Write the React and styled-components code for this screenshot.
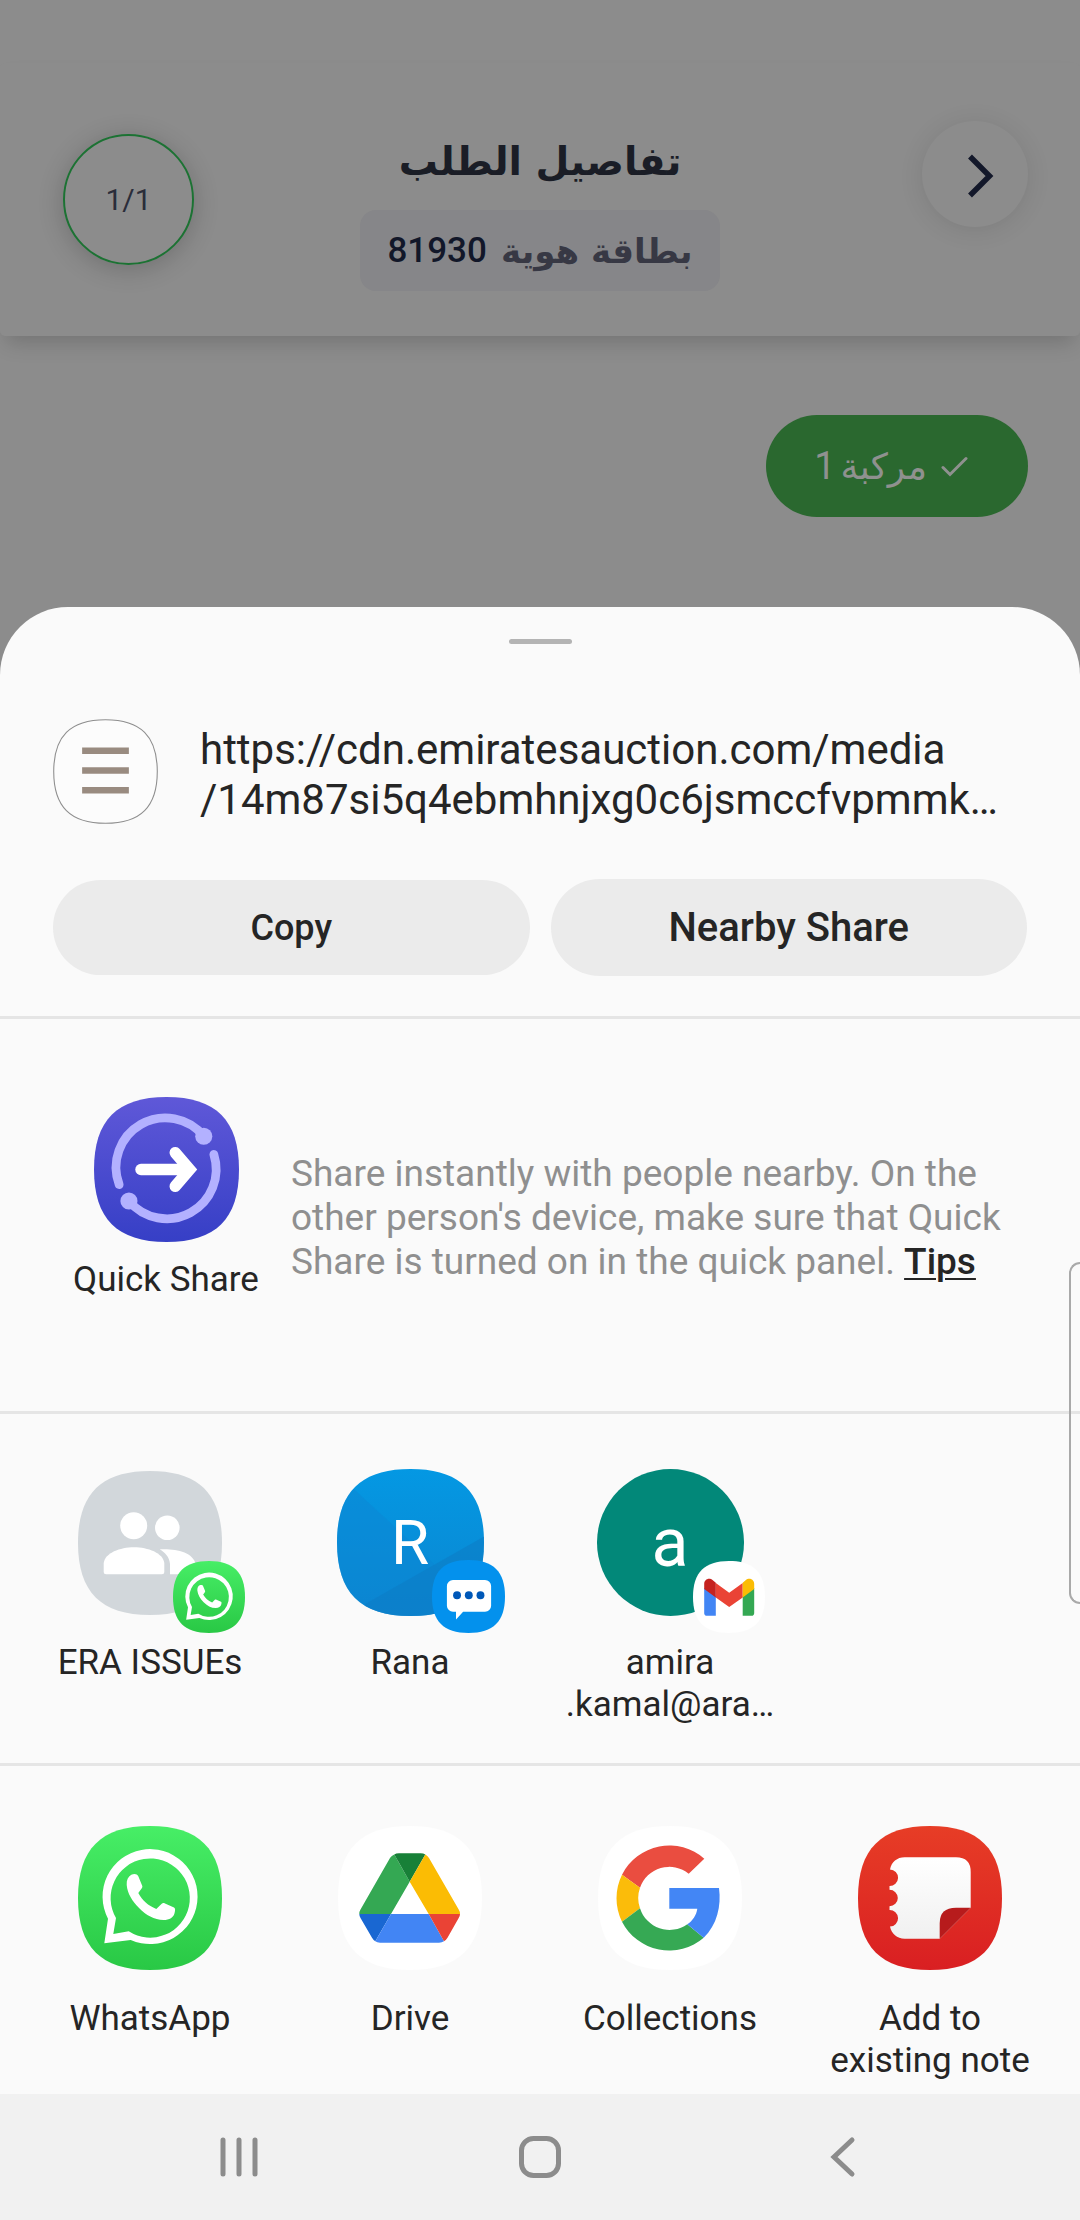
import React from "react";
import styled, { createGlobalStyle } from "styled-components";

const GlobalStyle = createGlobalStyle`
  *, *::before, *::after { box-sizing: border-box; }
  body { margin: 0; background: #8c8c8c; }
  button { font: inherit; color: inherit; border: 0; padding: 0; background: none; cursor: pointer; }
  svg { display: block; }
`;

const Screen = styled.div`
  position: relative;
  display: flex;
  flex-direction: column;
  min-height: 100vh;
  overflow: hidden;
  background: #8c8c8c;
  color: #252525;
  font-family: Roboto, "Liberation Sans", sans-serif;
`;

/* ---------- dimmed page behind the sheet ---------- */

const OrderHeader = styled.header`
  display: grid;
  grid-template-columns: 1fr auto 1fr;
  align-items: start;
  margin-top: 63px;
  padding: 58px 52px 45px;
  border-radius: 5px;
  background: #8c8c8c;
  box-shadow: 0 12px 20px -6px rgba(0, 0, 0, 0.18);
`;

const Progress = styled.div`
  display: grid;
  place-items: center;
  width: 131px;
  height: 131px;
  margin: 13px 0 0 11px;
  border: 2px solid #1c7233;
  border-radius: 50%;
  box-shadow: 0 4px 26px rgba(0, 0, 0, 0.2);
  color: #2a2d3a;
  font-size: 30px;
`;

const Heading = styled.div`
  display: flex;
  flex-direction: column;
  align-items: center;
  gap: 7px;
  direction: rtl;
  font-family: "DejaVu Sans", sans-serif;
`;

const Title = styled.h1`
  margin: 0;
  font-size: 39px;
  line-height: 82px;
  font-weight: 700;
  color: #1a1d26;
`;

const Subtitle = styled.div`
  display: flex;
  align-items: center;
  gap: 14px;
  height: 81px;
  padding: 0 27px;
  border-radius: 16px;
  background: #868689;
  color: #373844;
  font-size: 34px;
  font-weight: 700;
`;

const OrderNumber = styled.span`
  color: #121729;
  font-family: Roboto, sans-serif;
  font-size: 35px;
  font-weight: 500;
`;

const RoundButton = styled.button`
  display: grid;
  place-items: center;
  justify-self: end;
  width: 106px;
  height: 106px;
  border-radius: 50%;
  box-shadow: 0 3px 24px rgba(0, 0, 0, 0.1);
`;

const Vehicles = styled.div`
  display: flex;
  direction: rtl;
  padding: 79px 52px 90px;
`;

const VehicleChip = styled.button`
  display: flex;
  align-items: center;
  height: 102px;
  padding: 0 60px 0 48px;
  border-radius: 51px;
  background: #2a682f;
  color: #8f918f;
  font-family: "DejaVu Sans", sans-serif;
  font-size: 36px;

  svg { margin-left: 14px; }
`;

const ChipCount = styled.span`
  margin-right: 5px;
  font-family: Roboto, sans-serif;
  font-size: 38px;
`;

/* ---------- share sheet ---------- */

const Sheet = styled.main`
  display: flex;
  flex-direction: column;
  flex: 1;
  border-radius: 68px 68px 0 0;
  background: #fafafa;
`;

const Grabber = styled.div`
  align-self: center;
  width: 63px;
  height: 5px;
  margin-top: 32px;
  border-radius: 3px;
  background: #b4b4b4;
`;

const LinkPreview = styled.section`
  display: flex;
  gap: 42px;
  padding: 75px 53px 54px;
`;

const LinkText = styled.p`
  flex: 1;
  margin: 6px 0 0;
  font-size: 42px;
  line-height: 50px;
  white-space: nowrap;
`;

const Actions = styled.div`
  display: flex;
  align-items: center;
  gap: 21px;
  padding: 0 53px 40px;
`;

const Action = styled.button`
  && {
    flex: 1;
    height: ${(p) => (p.$large ? 97 : 95)}px;
    border-radius: 49px;
    background: #ebebeb;
    font-size: ${(p) => (p.$large ? 40 : 36)}px;
    font-weight: 500;
  }
`;

const QuickShare = styled.section`
  display: flex;
  align-items: flex-start;
  gap: 31px;
  padding: 78px 72px 110px;
  border-top: 3px solid #e5e5e5;
`;

const QuickTarget = styled.button`
  display: flex;
  flex-direction: column;
  align-items: center;
  gap: 17px;
  flex: none;
  width: 188px;
`;

const QuickNote = styled.p`
  margin: 55px 0 0;
  color: #8f8f8f;
  font-size: 37px;
  line-height: 44px;
`;

const TipsLink = styled.a`
  display: inline-block;
  color: #252525;
  font-weight: 500;
  text-decoration: underline;
  text-decoration-thickness: 2px;
  text-underline-offset: 4px;
`;

const TargetGrid = styled.section`
  display: grid;
  grid-template-columns: repeat(4, 1fr);
  padding: ${(p) => (p.$contacts ? "55px 20px 37px" : "60px 20px 12px")};
  border-top: 3px solid #e5e5e5;
`;

const Target = styled.button`
  display: flex;
  flex-direction: column;
  align-items: center;
  gap: ${(p) => (p.$contacts ? 26 : 28)}px;
`;

const Label = styled.span`
  font-size: 35px;
  line-height: 42px;
  white-space: pre-line;
`;

const Avatar = styled.span`
  position: relative;
  display: grid;
  place-items: center;
  width: 147px;
  height: 147px;

  > * { grid-area: 1 / 1; }
`;

const Initial = styled.span`
  z-index: 1;
  color: #fff;
  font-size: ${(p) => p.$size}px;
  line-height: 62px;
`;

const Badge = styled.span`
  position: absolute;
  z-index: 2;
  right: -21px;
  bottom: -17px;
`;

const NavBar = styled.nav`
  display: grid;
  grid-template-columns: repeat(3, 1fr);
  height: 126px;
  padding: 0 88px;
  background: #f1f1f1;
`;

const NavButton = styled.button`
  display: grid;
  place-items: center;
`;

const EdgePanel = styled.div`
  position: absolute;
  top: 1262px;
  right: 0;
  width: 11px;
  height: 342px;
  border: 2px solid #a9a9a9;
  border-right: 0;
  border-radius: 12px 0 0 12px;
`;

/* ---------- drawings ---------- */

const SQUIRCLE =
  "M72 0C121 0 144 23 144 72S121 144 72 144 0 121 0 72 23 0 72 0Z";

function Tile({ size = 144, id, from, to, children }) {
  return (
    <svg width={size} height={size} viewBox="0 0 144 144" aria-hidden="true">
      <defs>
        <linearGradient id={id} x1="0" y1="0" x2="0" y2="1">
          <stop offset="0" stopColor={from} />
          <stop offset="1" stopColor={to} />
        </linearGradient>
        <clipPath id={`${id}-clip`}>
          <path d={SQUIRCLE} />
        </clipPath>
      </defs>
      <path d={SQUIRCLE} fill={`url(#${id})`} />
      <g clipPath={`url(#${id}-clip)`}>{children}</g>
    </svg>
  );
}

function WhatsAppIcon({ size, id }) {
  return (
    <Tile size={size} id={id} from="#47ee66" to="#29c845">
      <path
        fill="#fff"
        fillRule="evenodd"
        d="M26.3 117.3L30 92.7A47.5 47.5 0 1 1 52.7 114ZM35.3 108L50.7 105.3A39.6 39.6 0 1 0 38 92Z"
      />
      <path
        fill="#fff"
        d="M48.7 59C48.4 54 50 50.6 53.3 48.7C56 47.6 59 47.5 60.3 50.3L64.3 60C64.6 61.6 63.6 62.6 60.3 67C64.5 74.5 70 79.5 78.3 83L83.7 77.7C84.7 76.7 85.6 76.8 87 77.4L96 81.6C97.3 82.4 97.3 84 96.8 86C96 91.7 91 94 85.7 94C76 94 68 89 61.3 82.3C54 75 49.5 67.5 48.7 59Z"
      />
    </Tile>
  );
}

function QuickShareIcon() {
  return (
    <Tile size={145} id="quick" from="#5f58d8" to="#363fc6">
      <g fill="none" stroke="#b3b1ff" strokeWidth="8.7" strokeLinecap="round">
        <path d="M25 87A49 49 0 0 1 109 39" />
        <path d="M119 57A49 49 0 0 1 34.7 103.3" />
      </g>
      <circle cx="109" cy="39" r="8.5" fill="#b3b1ff" />
      <circle cx="34.7" cy="103.3" r="8.5" fill="#b3b1ff" />
      <g fill="none" stroke="#fff" strokeWidth="11.4" strokeLinecap="round">
        <path d="M46.7 72H90" />
        <path d="M80.7 55.3L95 72L80.7 88.7" />
      </g>
    </Tile>
  );
}

function GroupIcon() {
  return (
    <Tile id="group" from="#d2d7db" to="#d2d7db">
      <g fill="#fff">
        <circle cx="55.7" cy="54.7" r="13.5" />
        <circle cx="89.3" cy="56.7" r="12.3" />
        <path d="M28.2 103.3Q25.7 103.3 25.7 100.8V92C27 82 42 76.3 56 76.3S85 82 86.3 92V100.8Q86.3 103.3 83.8 103.3Z" />
        <path d="M81.7 78.3C98 77.5 115 81 117.7 93V103.3H92V93C91.5 86 87 81.5 81.7 78.3Z" />
      </g>
    </Tile>
  );
}

function BlueTile() {
  return (
    <Tile size={147} id="rana" from="#0498e3" to="#0b86d0">
      <path d="M17 20L70 69L144 140V144H0V20Z" fill="#0d86d3" opacity="0.45" />
      <path d="M144 66L28 132V144H144Z" fill="#0d7cc4" opacity="0.55" />
    </Tile>
  );
}

function GreenDisc() {
  return (
    <svg width="147" height="147" viewBox="0 0 147 147" aria-hidden="true">
      <circle cx="73.5" cy="73.5" r="73.5" fill="#028879" />
    </svg>
  );
}

function MessagesIcon() {
  return (
    <Tile size={73} id="messages" from="#0391ed" to="#0391ed">
      <g transform="scale(2)">
        <path
          fill="#fff"
          d="M21 19.7H52.3A6 6 0 0 1 58.3 25.7V45A6 6 0 0 1 52.3 51H30.7L23.7 58.7V51H21A6 6 0 0 1 14.7 45V25.7A6 6 0 0 1 21 19.7Z"
        />
        <g fill="#0058b8">
          <circle cx="24.7" cy="34.7" r="3.9" />
          <circle cx="36.3" cy="34.7" r="3.9" />
          <circle cx="47.8" cy="34.7" r="3.9" />
        </g>
      </g>
    </Tile>
  );
}

function GmailIcon() {
  return (
    <Tile size={72} id="gmail" from="#fff" to="#fff">
      <g transform="scale(2)">
        <path fill="#4285f4" d="M11.2 27L22.8 35V54.7H14Q11.2 54.7 11.2 51.9Z" />
        <path fill="#34a853" d="M61.2 27L49.7 35V54.7H58.4Q61.2 54.7 61.2 51.9Z" />
        <path fill="#ea4335" d="M22.8 22L36.2 31.7L49.7 22V36.4L36.2 46L22.8 36.4Z" />
        <path fill="#c5221f" d="M11.2 28V23C11.2 18.5 16 16 19.8 19.3L22.8 21.7V36.4Z" />
        <path fill="#fbbc04" d="M61.2 28V23C61.2 18.5 56.4 16 52.6 19.3L49.7 21.7V36.4Z" />
      </g>
    </Tile>
  );
}

function DriveIcon() {
  return (
    <Tile id="drive" from="#fff" to="#fff">
      <path fill="#34a853" d="M56.3 28.5L71.7 55.7L53 88H21.3Q21 86 22.5 83.5L52 32Q53.5 29.5 56.3 28.5Z" />
      <path fill="#188038" d="M56.3 28.5Q58 27.3 61 27.3H82.5Q85.5 27.3 87.3 28.5L71.7 55.7Z" />
      <path fill="#fbbc04" d="M87.3 28.5Q89.5 29.5 91 32L120.7 83.5Q122.3 86 122 88H90.7L71.7 55.7Z" />
      <path fill="#1967d2" d="M21.3 88H53L37.3 115.3Q35.5 114.3 34 111.8L22.5 92Q21.3 90 21.3 88Z" />
      <path fill="#4285f4" d="M53 88H90.7L106 115.3Q104 116.7 101 116.7H42Q39 116.7 37.3 115.3Z" />
      <path fill="#ea4335" d="M90.7 88H122Q122 90 120.7 92L109.5 111.8Q108 114.3 106 115.3Z" />
    </Tile>
  );
}

function GoogleIcon() {
  return (
    <Tile id="google" from="#fff" to="#fff">
      <path fill="#ea4d40" d="M24 48.7A53 53 0 0 1 106.3 32.7L90.7 47.7A31 31 0 0 0 42 61.7Z" />
      <path fill="#fbbc0a" d="M24 48.7A53 53 0 0 0 24 95.7L42 82.3A31 31 0 0 1 42 61.7Z" />
      <path fill="#36a954" d="M24 95.7A53 53 0 0 0 105.7 111.7L89.3 98.3A31 31 0 0 1 42 82.3Z" />
      <path fill="#4386f5" d="M71.3 62H121C123.5 80 119 99 105.7 111.7L89.3 98.3C94.5 95 98.5 89 99.3 82.7H71.3Z" />
    </Tile>
  );
}

function NotesIcon() {
  return (
    <Tile id="notes" from="#e73d26" to="#d91f22">
      <defs>
        <linearGradient id="paper" x1="0" y1="0" x2="0" y2="1">
          <stop offset="0" stopColor="#fff" />
          <stop offset="1" stopColor="#f0f0f0" />
        </linearGradient>
      </defs>
      <path
        fill="url(#paper)"
        d="M46.7 31.3H98Q112.7 31.3 112.7 46V81.7L81.7 112.7H46.7C39 112.7 33.5 108 32 100.6A8.3 8.3 0 0 0 31.5 84V80.3A8.3 8.3 0 0 0 31.5 63.7V60A8.3 8.3 0 0 0 32 43.4C33.5 36 39 31.3 46.7 31.3Z"
      />
      <path fill="#b71b1c" d="M112.7 81.7L81.7 112.7V97Q81.7 81.7 98 81.7Z" />
    </Tile>
  );
}

function LinkIcon() {
  return (
    <svg width="105" height="105" viewBox="-1 -1 146 146" aria-hidden="true">
      <path d={SQUIRCLE} fill="#fcfcfc" stroke="#8e8e8e" strokeWidth="1.5" />
      <path d="M39.5 43H104.5M39.5 70.5H104.5M39.5 98H104.5" stroke="#998b80" strokeWidth="9" />
    </svg>
  );
}

const contacts = [
  { label: "ERA ISSUEs", tile: <GroupIcon />, badge: <WhatsAppIcon size={72} id="wa-badge" /> },
  { label: "Rana", tile: <BlueTile />, initial: "R", size: 62, badge: <MessagesIcon /> },
  { label: "amira\n.kamal@ara…", tile: <GreenDisc />, initial: "a", size: 68, badge: <GmailIcon /> },
];

const apps = [
  { label: "WhatsApp", icon: <WhatsAppIcon id="wa-app" /> },
  { label: "Drive", icon: <DriveIcon /> },
  { label: "Collections", icon: <GoogleIcon /> },
  { label: "Add to\nexisting note", icon: <NotesIcon /> },
];

export default function App() {
  return (
    <Screen>
      <GlobalStyle />

      <OrderHeader>
        <Progress>1/1</Progress>
        <Heading lang="ar">
          <Title>تفاصيل الطلب</Title>
          <Subtitle>
            <span>بطاقة هوية</span>
            <OrderNumber>81930</OrderNumber>
          </Subtitle>
        </Heading>
        <RoundButton aria-label="Back">
          <svg width="106" height="106" viewBox="0 0 106 106" fill="none" stroke="#13182a" strokeWidth="5.5">
            <path d="M48 35.5L67.5 55L48 74.5" />
          </svg>
        </RoundButton>
      </OrderHeader>

      <Vehicles lang="ar">
        <VehicleChip>
          <svg width="27" height="21" viewBox="0 0 27 21" fill="none" stroke="#8f918f" strokeWidth="3" strokeLinecap="round">
            <path d="M2 11.5L9 18.5L25 2.5" />
          </svg>
          <span>مركبة</span>
          <ChipCount>1</ChipCount>
        </VehicleChip>
      </Vehicles>

      <Sheet>
        <Grabber />
        <LinkPreview>
          <LinkIcon />
          <LinkText>
            https://cdn.emiratesauction.com/media
            <br />
            /14m87si5q4ebmhnjxg0c6jsmccfvpmmk…
          </LinkText>
        </LinkPreview>
        <Actions>
          <Action>Copy</Action>
          <Action $large>Nearby Share</Action>
        </Actions>

        <QuickShare>
          <QuickTarget>
            <QuickShareIcon />
            <Label>Quick Share</Label>
          </QuickTarget>
          <QuickNote>
            Share instantly with people nearby. On the other person's device, make sure that Quick
            Share is turned on in the quick panel. <TipsLink href="#tips">Tips</TipsLink>
          </QuickNote>
        </QuickShare>

        <TargetGrid $contacts>
          {contacts.map((c) => (
            <Target key={c.label} $contacts>
              <Avatar>
                {c.tile}
                {c.initial && <Initial $size={c.size}>{c.initial}</Initial>}
                <Badge>{c.badge}</Badge>
              </Avatar>
              <Label>{c.label}</Label>
            </Target>
          ))}
        </TargetGrid>

        <TargetGrid>
          {apps.map((a) => (
            <Target key={a.label}>
              {a.icon}
              <Label>{a.label}</Label>
            </Target>
          ))}
        </TargetGrid>
      </Sheet>

      <NavBar>
        <NavButton aria-label="Recent apps">
          <svg width="42" height="42" viewBox="0 0 42 42" stroke="#8c8c8c" strokeWidth="5" strokeLinecap="round">
            <path d="M5 4V38M21 4V38M37 4V38" />
          </svg>
        </NavButton>
        <NavButton aria-label="Home">
          <svg width="42" height="42" viewBox="0 0 42 42" fill="none" stroke="#8c8c8c" strokeWidth="5">
            <rect x="2.5" y="2.5" width="37" height="37" rx="12" />
          </svg>
        </NavButton>
        <NavButton aria-label="Go back">
          <svg width="42" height="42" viewBox="0 0 42 42" fill="none" stroke="#8c8c8c" strokeWidth="5" strokeLinecap="round">
            <path d="M32 4L14 21L32 38" />
          </svg>
        </NavButton>
      </NavBar>

      <EdgePanel />
    </Screen>
  );
}
